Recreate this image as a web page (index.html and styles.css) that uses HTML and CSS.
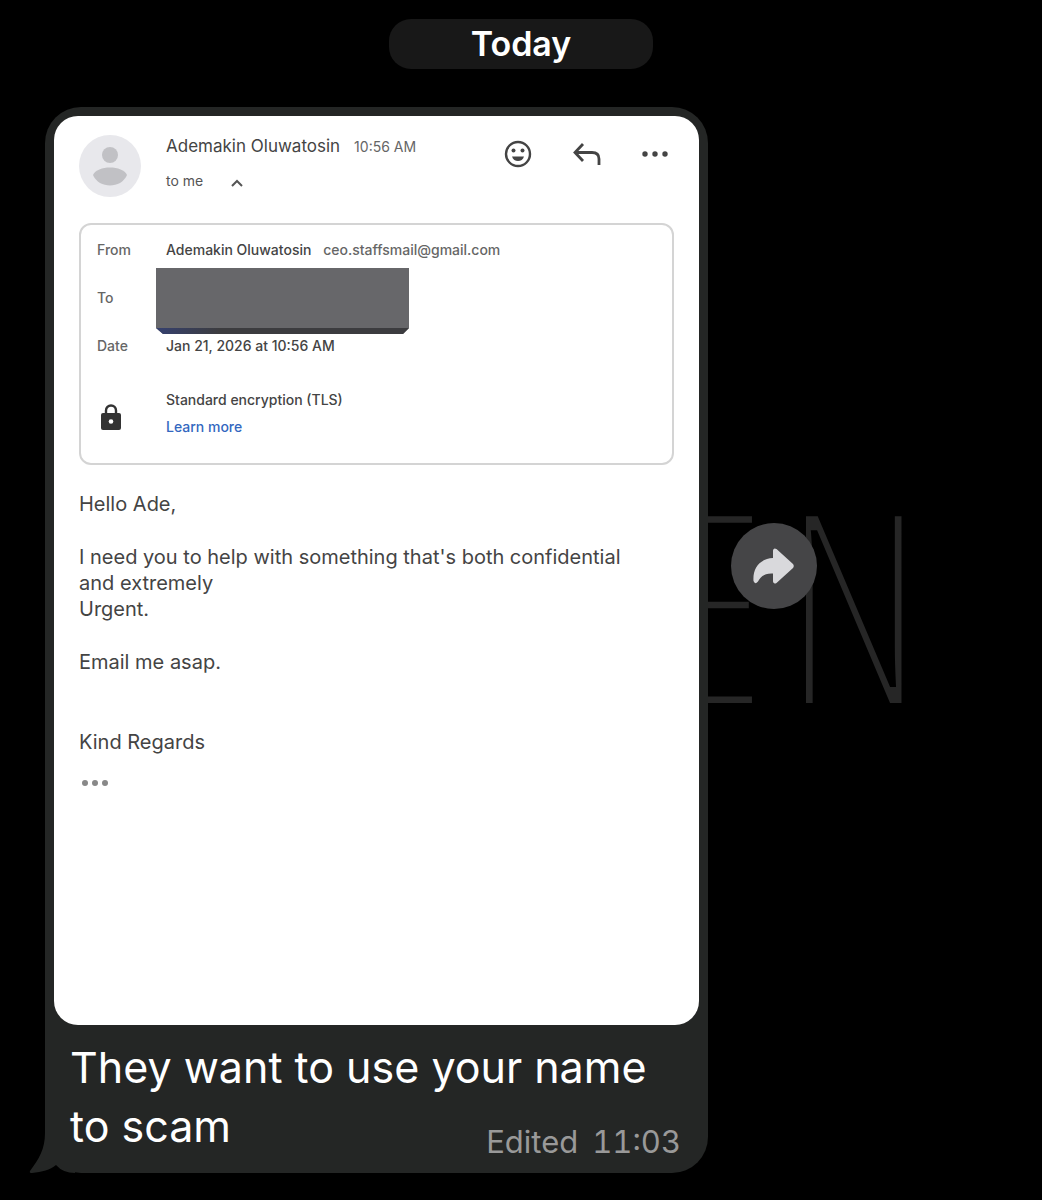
FILE: index.html
```
<!DOCTYPE html>
<html lang="en">
<head>
  <meta charset="UTF-8">
  <meta name="viewport" content="width=device-width, initial-scale=1.0">
  <title>Chat</title>
  <link rel="stylesheet" href="styles.css">
</head>
<body>
  <div class="wallpaper" aria-hidden="true"><span>E</span><span>N</span></div>

  <main class="chat">
    <div class="day">Today</div>

    <div class="message">
      <div class="bubble">
        <svg class="tail" viewBox="0 0 46 60" aria-hidden="true">
          <path d="M16 0V20C16 36 10 46 1 58Q0 60 3 60C13 59 21 57 27 52Q34 60 46 60V0Z"/>
        </svg>

        <article class="mail">
          <header class="mail-head">
            <svg class="avatar" viewBox="0 0 62 62" aria-hidden="true">
              <circle cx="31" cy="31" r="31" fill="#e8e8ec"/>
              <circle cx="31" cy="20" r="8" fill="#c1c1c5"/>
              <path d="M14 40C18 30 44 30 48 40C42 54 20 54 14 40Z" fill="#c1c1c5"/>
            </svg>
            <div class="sender">
              <div class="sender-line">
                <span class="name">Ademakin Oluwatosin</span>
                <time>10:56 AM</time>
              </div>
              <button class="to-me">
                to me
                <svg width="12" height="12" viewBox="0 0 12 12"><path d="M1 11L6 6L11 11" fill="none" stroke="#555" stroke-width="2"/></svg>
              </button>
            </div>
            <div class="actions">
              <button aria-label="Add reaction">
                <svg width="28" height="28" viewBox="0 0 28 28">
                  <circle cx="14" cy="14" r="12" fill="none" stroke="#444" stroke-width="2.4"/>
                  <circle cx="9.5" cy="10.5" r="2" fill="#444"/>
                  <circle cx="18.5" cy="10.5" r="2" fill="#444"/>
                  <path d="M8 16.5H20C18.500 22.500 9.500 22.500 8 16.500Z" fill="#444"/>
                </svg>
              </button>
              <button aria-label="Reply">
                <svg width="30" height="24" viewBox="0 0 30 24">
                  <path d="M11 2L3 10.500L11 19M3 10.500H20Q27 10.500 27 17V23" fill="none" stroke="#444" stroke-width="2.800"/>
                </svg>
              </button>
              <button aria-label="More">
                <svg width="26" height="6" viewBox="0 0 26 6" fill="#444">
                  <circle cx="3" cy="3" r="2.700"/><circle cx="13" cy="3" r="2.700"/><circle cx="23" cy="3" r="2.700"/>
                </svg>
              </button>
            </div>
          </header>

          <dl class="details">
            <dt>From</dt>
            <dd><span class="name">Ademakin Oluwatosin</span> <span class="address">ceo.staffsmail@gmail.com</span></dd>
            <dt>To</dt>
            <dd class="to"><span class="redacted"></span></dd>
            <dt>Date</dt>
            <dd>Jan 21, 2026 at 10:56 AM</dd>
            <dt class="lock">
              <svg width="20" height="26" viewBox="0 0 20 26" role="img" aria-label="Security">
                <path d="M5 10V6.500A5 5 0 0 1 15 6.500V10" fill="none" stroke="#333" stroke-width="2.400"/>
                <rect y="9" width="20" height="17" rx="2" fill="#333"/>
                <circle cx="10" cy="17.500" r="2.300" fill="#fff"/>
              </svg>
            </dt>
            <dd class="security">Standard encryption (TLS)<br><a href="#">Learn more</a></dd>
          </dl>

          <div class="mail-body">
            <p>Hello Ade,</p>
            <p>I need you to help with something that's both confidential and extremely<br>Urgent.</p>
            <p>Email me asap.</p>
            <p class="sign">Kind Regards</p>
            <button class="trimmed" aria-label="Show trimmed content">
              <svg width="26" height="6" viewBox="0 0 26 6" fill="#888">
                <circle cx="3" cy="3" r="3"/><circle cx="13" cy="3" r="3"/><circle cx="23" cy="3" r="3"/>
              </svg>
            </button>
          </div>
        </article>

        <div class="caption">
          They want to use your name to scam
          <div class="meta"><span>Edited</span> <time>11:03</time></div>
        </div>
      </div>

      <button class="forward" aria-label="Forward">
        <svg width="42" height="36" viewBox="0 0 42 36">
          <path d="M20 2.500Q20.500 -0.500 23.500 1L40 16Q41.500 18 40 20L23.500 35Q20.500 36.500 20 33.500V25.500C12 25 8 28 5 33.500Q2 37 0.500 33C-0.500 20 7 10.500 20 10Z" fill="#d9d9dc"/>
        </svg>
      </button>
    </div>
  </main>
</body>
</html>
```
FILE: styles.css
```
* {
  box-sizing: border-box;
}
body {
  margin: 0;
  min-height: 100vh;
  background: #000;
  color: #fff;
  font-family: Inter, "Liberation Sans", sans-serif;
}
p, dl, dd {
  margin: 0;
}
button {
  display: flex;
  padding: 0;
  border: none;
  background: none;
  color: inherit;
  font: inherit;
  cursor: pointer;
}
svg {
  display: block;
}

/* faint lettering behind the conversation, the black stroke thins it */
.wallpaper {
  position: absolute;
  top: 471px;
  left: 664px;
  z-index: -1;
  display: flex;
  gap: 14px;
  color: #262626;
  font-family: "Open Sans Condensed Light", "Roboto Condensed Thin", "Lato Hairline", Lato, sans-serif;
  font-size: 270px;
  font-weight: 100;
  line-height: 260px;
  -webkit-text-stroke: 6px #000;
}

.chat {
  display: flex;
  flex-direction: column;
  padding: 19px 45px 27px;
}
.day {
  align-self: center;
  padding: 0 82px;
  border-radius: 22px;
  background: #181818;
  font-size: 34px;
  font-weight: 600;
  line-height: 50px;
}
.message {
  display: flex;
  align-items: center;
  gap: 23px;
  margin-top: 38px;
}
.bubble {
  position: relative;
  z-index: 0;
  flex: 0 1 663px;
  padding: 9px;
  border-radius: 36px;
  background: #242625;
}
.tail {
  position: absolute;
  bottom: 0;
  left: -16px;
  z-index: -1;
  width: 46px;
  height: 60px;
  fill: #242625;
}

/* forwarded mail */
.mail {
  aspect-ratio: 645 / 909;
  padding: 19px 25px;
  border-radius: 24px;
  background: #fff;
  color: #444;
}
.mail-head {
  display: flex;
  gap: 25px;
}
.avatar {
  width: 62px;
  height: 62px;
}
.sender-line {
  display: flex;
  align-items: baseline;
  gap: 14px;
  font-size: 17px;
  line-height: 22px;
}
.sender-line time {
  color: #666;
  font-size: 14px;
}
.to-me {
  align-items: center;
  gap: 28px;
  margin-top: 13px;
  color: #555;
  font-size: 14px;
  line-height: 20px;
}
.actions {
  display: flex;
  align-items: center;
  align-self: flex-start;
  gap: 40px;
  height: 38px;
  margin-left: auto;
  padding-right: 6px;
}
.details {
  display: grid;
  grid-template-columns: 69px 1fr;
  grid-template-rows: repeat(3, 48px) auto;
  margin-top: 26px;
  padding: 1px 16px 23px;
  border: 2px solid #d4d4d4;
  border-radius: 12px;
  color: #444;
  font-size: 14px;
  font-weight: 500;
  line-height: 48px;
}
.details dt,
.address {
  color: #666;
}
.address {
  margin-left: 8px;
}
.to {
  position: relative;
}
.redacted {
  position: absolute;
  top: -6px;
  left: -10px;
  width: 253px;
  height: 66px;
  background: linear-gradient(to right, #35406f, #3c3c3f 25%) bottom / 100% 6px no-repeat, #67676a;
  clip-path: polygon(0 0, 100% 0, 100% 60px, 247px 100%, 7px 100%, 0 60px);
}
.lock {
  padding: 34px 0 0 4px;
}
.security {
  padding-top: 16px;
  line-height: 27px;
}
.security a {
  color: #3367c0;
  text-decoration: none;
}
.mail-body {
  margin-top: 26px;
  padding-right: 20px;
  font-size: 20px;
  line-height: 26px;
}
.mail-body p + p {
  margin-top: 27px;
}
.mail-body .sign {
  margin-top: 54px;
}
.trimmed {
  margin: 25px 0 0 3px;
}

.caption {
  padding: 13px 18px 8px 16px;
  font-size: 43px;
  line-height: 59px;
}
/* floats up next to the last line of the caption */
.meta {
  display: flex;
  float: right;
  gap: 14px;
  margin-top: 31px;
  color: #999;
  font-size: 31px;
  font-variant-numeric: tabular-nums;
  line-height: 28px;
}

.forward {
  flex: none;
  align-items: center;
  justify-content: center;
  width: 86px;
  height: 86px;
  margin-bottom: 149px;
  border-radius: 50%;
  background: #454547;
}
```
